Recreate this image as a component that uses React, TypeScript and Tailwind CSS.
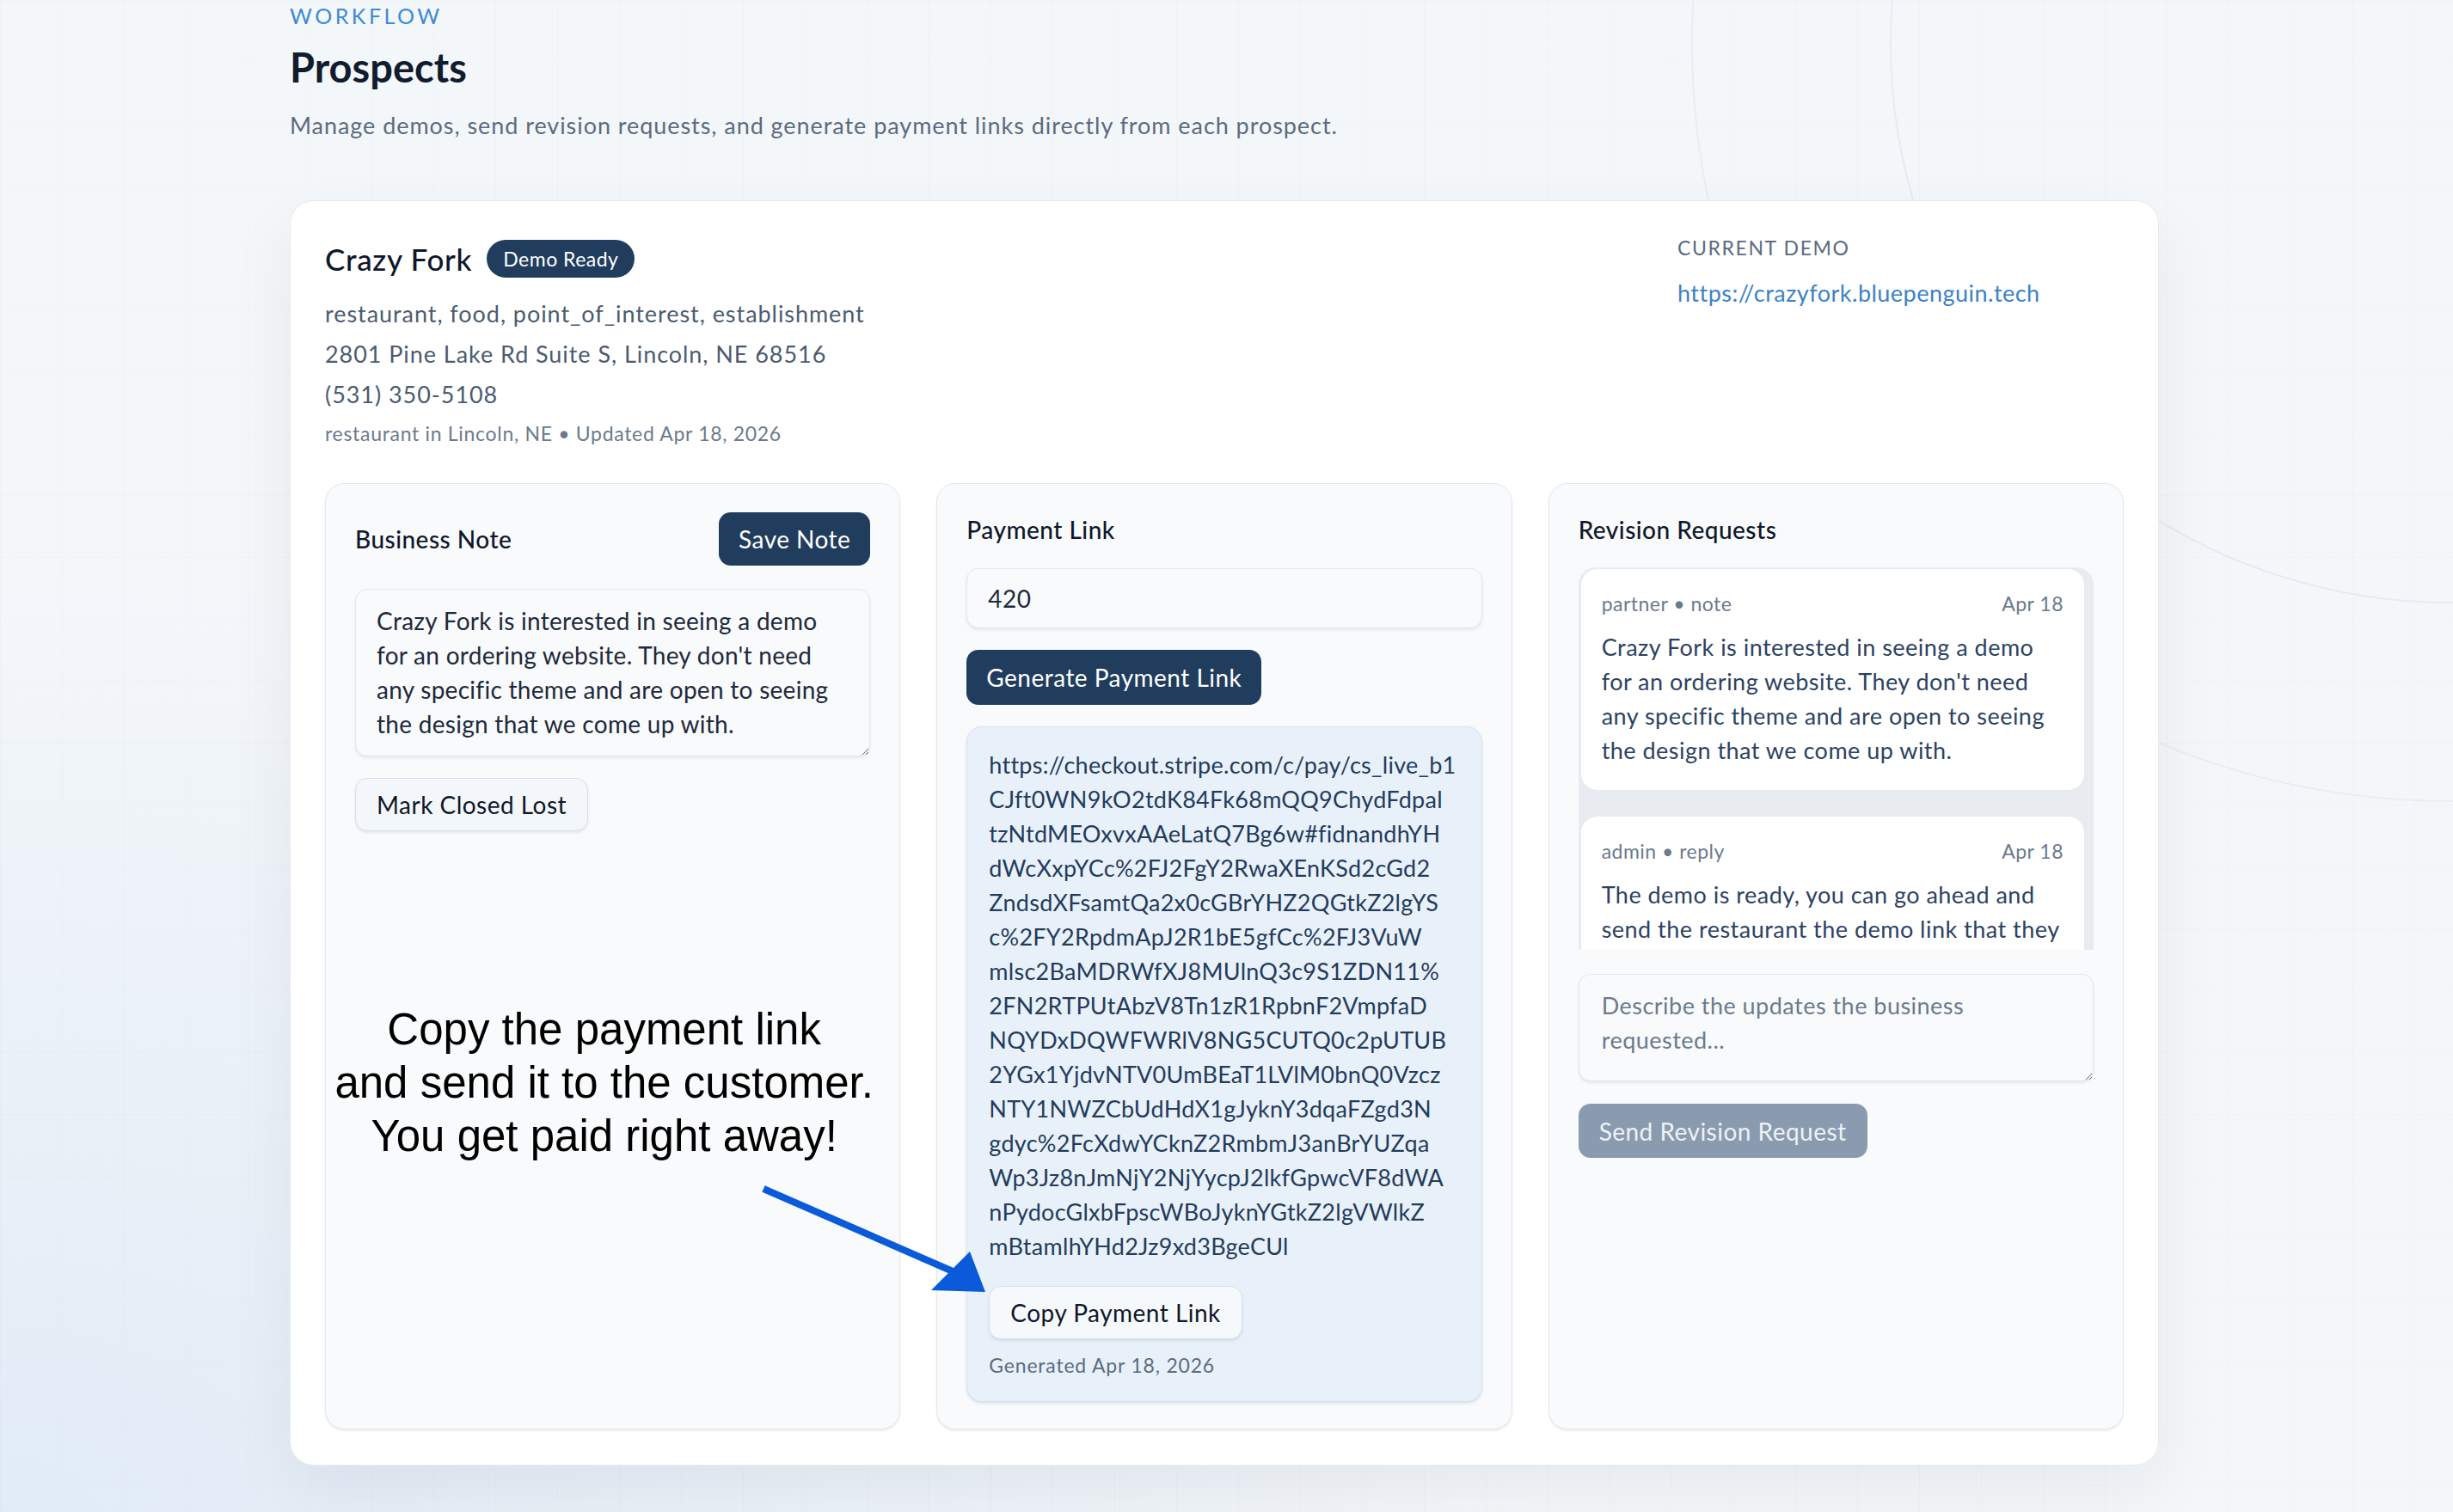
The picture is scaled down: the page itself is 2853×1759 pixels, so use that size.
import React from 'react';

const paymentLines = [
  'https://checkout.stripe.com/c/pay/cs_live_b1',
  'CJft0WN9kO2tdK84Fk68mQQ9ChydFdpal',
  'tzNtdMEOxvxAAeLatQ7Bg6w#fidnandhYH',
  'dWcXxpYCc%2FJ2FgY2RwaXEnKSd2cGd2',
  'ZndsdXFsamtQa2x0cGBrYHZ2QGtkZ2lgYS',
  'c%2FY2RpdmApJ2R1bE5gfCc%2FJ3VuW',
  'mlsc2BaMDRWfXJ8MUlnQ3c9S1ZDN11%',
  '2FN2RTPUtAbzV8Tn1zR1RpbnF2VmpfaD',
  'NQYDxDQWFWRlV8NG5CUTQ0c2pUTUB',
  '2YGx1YjdvNTV0UmBEaT1LVlM0bnQ0Vzcz',
  'NTY1NWZCbUdHdX1gJyknY3dqaFZgd3N',
  'gdyc%2FcXdwYCknZ2RmbmJ3anBrYUZqa',
  'Wp3Jz8nJmNjY2NjYycpJ2lkfGpwcVF8dWA',
  'nPydocGlxbFpscWBoJyknYGtkZ2lgVWlkZ',
  'mBtamlhYHd2Jz9xd3BgeCUl',
];

const note =
  "Crazy Fork is interested in seeing a demo for an ordering website. They don't need any specific theme and are open to seeing the design that we come up with.";

const noteLines = [
  'Crazy Fork is interested in seeing a demo',
  "for an ordering website. They don't need",
  'any specific theme and are open to seeing',
  'the design that we come up with.',
];

const revisions = [
  { who: 'partner', kind: 'note', date: 'Apr 18', body: note },
  {
    who: 'admin',
    kind: 'reply',
    date: 'Apr 18',
    body: 'The demo is ready, you can go ahead and send the restaurant the demo link that they can click to preview. Let us know if they want changes.',
  },
];

const Panel: React.FC<{ children: React.ReactNode }> = ({ children }) => (
  <div className="h-[1101px] rounded-[22px] border border-[#e3e8ef] bg-[#f8fafc] px-[34px] pt-[33px] shadow-[0_2px_2px_rgba(148,163,184,0.18)]">
    {children}
  </div>
);

export default function App() {
  return (
    <div className="relative min-h-screen overflow-hidden bg-[#f4f7fa] font-['Lato',sans-serif] tracking-[0.03em] text-[#0f1b2d]">
      <div className="pointer-events-none absolute inset-0 bg-[linear-gradient(to_right,rgba(148,163,184,0.05)_1px,transparent_1px),linear-gradient(to_bottom,rgba(148,163,184,0.05)_1px,transparent_1px)] bg-[size:72px_72px]" />
      <div className="pointer-events-none absolute inset-0 bg-[radial-gradient(ellipse_at_0%_100%,rgba(191,214,240,0.35),transparent_45%)]" />
      <div className="pointer-events-none absolute left-[2198px] top-[-602px] h-[1304px] w-[1304px] rounded-full border-2 border-[#e6ebf1]" />
      <div className="pointer-events-none absolute left-[1967px] top-[-833px] h-[1766px] w-[1766px] rounded-full border-2 border-[#e9edf3]" />

      <div className="relative ml-[337px] w-[2174px] pt-[3px]">
        <div className="text-[25px] leading-[30px] tracking-[0.14em] text-[#3d8bd4]">WORKFLOW</div>
        <h1 className="mt-[18px] text-[47px] font-bold leading-[54px] tracking-[0] text-[#111c2e]">Prospects</h1>
        <p className="mt-[25px] text-[27px] leading-[32px] tracking-[0.035em] text-[#5b6b80]">
          Manage demos, send revision requests, and generate payment links directly from each prospect.
        </p>

        <div className="mt-[71px] rounded-[28px] border border-[#e6ebf1] bg-white px-[40px] pb-[41px] pt-[40px] shadow-[0_30px_80px_rgba(15,23,42,0.06)]">
          <div className="flex items-start justify-between">
            <div className="pt-[5px]">
              <div className="flex h-[44px] items-center gap-[17px]">
                <span className="text-[35px] font-medium tracking-[0.02em] text-[#0f172a]">Crazy Fork</span>
                <span className="flex h-[44px] items-center rounded-full bg-[#213d5e] px-[19px] text-[23px] text-white">Demo Ready</span>
              </div>
              <div className="mt-[18px] text-[27px] leading-[47px] tracking-[0.035em] text-[#4b5b70]">
                <div>restaurant, food, point_of_interest, establishment</div>
                <div>2801 Pine Lake Rd Suite S, Lincoln, NE 68516</div>
                <div>(531) 350-5108</div>
              </div>
              <div className="mt-[7px] text-[23px] leading-[30px] tracking-[0.03em] text-[#6b7a8d]">restaurant in Lincoln, NE • Updated Apr 18, 2026</div>
            </div>
            <div className="w-[519px]">
              <div className="text-[23px] leading-[28px] tracking-[0.07em] text-[#5b6b80]">CURRENT DEMO</div>
              <a className="mt-[22px] block text-[27px] leading-[34px] text-[#3b82c4]">https://crazyfork.bluepenguin.tech</a>
            </div>
          </div>

          <div className="mt-[43px] grid grid-cols-3 gap-[42px]">
            <Panel>
              <div className="flex h-[62px] items-center justify-between">
                <span className="text-[28px] font-medium text-[#0f172a]">Business Note</span>
                <button className="h-[62px] rounded-[14px] bg-[#213d5e] px-[23px] text-[28px] text-white">Save Note</button>
              </div>
              <textarea
                readOnly
                defaultValue={noteLines.join('\n')}
                className="mt-[27px] block h-[195px] w-full resize-y overflow-hidden whitespace-pre rounded-[14px] border border-[#e2e8f0] bg-[#f8fafc] px-[24px] pt-[16px] text-[28px] leading-[40px] tracking-[0.01em] text-[#1e293b] shadow-[0_2px_3px_rgba(148,163,184,0.2)] outline-none"
              />
              <button className="mt-[25px] h-[62px] rounded-[14px] border border-[#d5dfea] bg-[#f3f7fb] px-[24px] text-[28px] text-[#0f172a] shadow-[0_2px_3px_rgba(148,163,184,0.2)]">
                Mark Closed Lost
              </button>
              <div className="-mx-[34px] mt-[200px] whitespace-nowrap pr-[20px] text-center font-['Liberation_Sans',Arial,sans-serif] text-[51px] leading-[62px] tracking-[0] text-black">
                Copy the payment link
                <br />
                and send it to the customer.
                <br />
                You get paid right away!
              </div>
            </Panel>

            <Panel>
              <div className="mt-[2px] text-[28px] font-medium leading-[36px] text-[#0f172a]">Payment Link</div>
              <input
                readOnly
                value="420"
                className="mt-[27px] block h-[70px] w-full rounded-[14px] border border-[#e2e8f0] bg-[#f8fafc] px-[24px] text-[28px] text-[#1e293b] shadow-[0_2px_3px_rgba(148,163,184,0.2)] outline-none"
              />
              <button className="mt-[25px] h-[64px] rounded-[14px] bg-[#213d5e] px-[23px] text-[28px] text-white">Generate Payment Link</button>
              <div className="mt-[25px] rounded-[18px] border border-[#d6e2ee] bg-[#e8f1fa] px-[25px] pb-[27px] pt-[24px] shadow-[0_2px_3px_rgba(148,163,184,0.25)]">
                <div className="text-[27px] leading-[40px] tracking-[0.01em] text-[#243b5a]">
                  {paymentLines.map((line) => (
                    <div key={line}>{line}</div>
                  ))}
                </div>
                <button className="mt-[26px] h-[62px] rounded-[14px] border border-[#d8e2ec] bg-[#f6f9fc] px-[24px] text-[28px] text-[#0f172a] shadow-[0_2px_3px_rgba(148,163,184,0.25)]">
                  Copy Payment Link
                </button>
                <div className="mt-[15px] text-[23px] leading-[30px] tracking-[0.035em] text-[#5b6b80]">Generated Apr 18, 2026</div>
              </div>
            </Panel>

            <Panel>
              <div className="mt-[2px] text-[28px] font-medium leading-[36px] text-[#0f172a]">Revision Requests</div>
              <div className="mt-[26px] flex h-[445px] flex-col gap-[29px] overflow-hidden rounded-t-[20px] bg-[#e8ecf1] pl-[2px] pr-[10px] pt-[1px]">
                {revisions.map((r) => (
                  <div key={r.who} className="shrink-0 rounded-[20px] border border-[#e6ebf1] bg-white px-[24px] pb-[26px] pt-[25px]">
                    <div className="flex justify-between text-[23px] leading-[30px] text-[#6b7a8d]">
                      <span>
                        {r.who} • {r.kind}
                      </span>
                      <span>{r.date}</span>
                    </div>
                    <div className="mt-[16px] text-[27px] leading-[40px] text-[#2c4262]">{r.body}</div>
                  </div>
                ))}
              </div>
              <textarea
                readOnly
                placeholder="Describe the updates the business requested..."
                className="mt-[28px] block h-[125px] w-full resize-y rounded-[14px] border border-[#e2e8f0] bg-[#f8fafc] px-[26px] pt-[16px] text-[27px] leading-[40px] text-[#1e293b] shadow-[0_2px_3px_rgba(148,163,184,0.2)] outline-none placeholder:text-[#6b7a8d]"
              />
              <button className="mt-[26px] h-[63px] rounded-[14px] bg-[#8a9bb0] px-[24px] text-[28px] text-[#eef2f6]">Send Revision Request</button>
            </Panel>
          </div>
        </div>
      </div>

      <svg className="pointer-events-none absolute left-[880px] top-[1375px]" width="280" height="140" viewBox="0 0 280 140">
        <line x1="8" y1="8" x2="228" y2="104" stroke="#0b5ad9" strokeWidth="8" />
        <polygon points="248,81 203,126 266,128" fill="#0b5ad9" />
      </svg>
    </div>
  );
}
